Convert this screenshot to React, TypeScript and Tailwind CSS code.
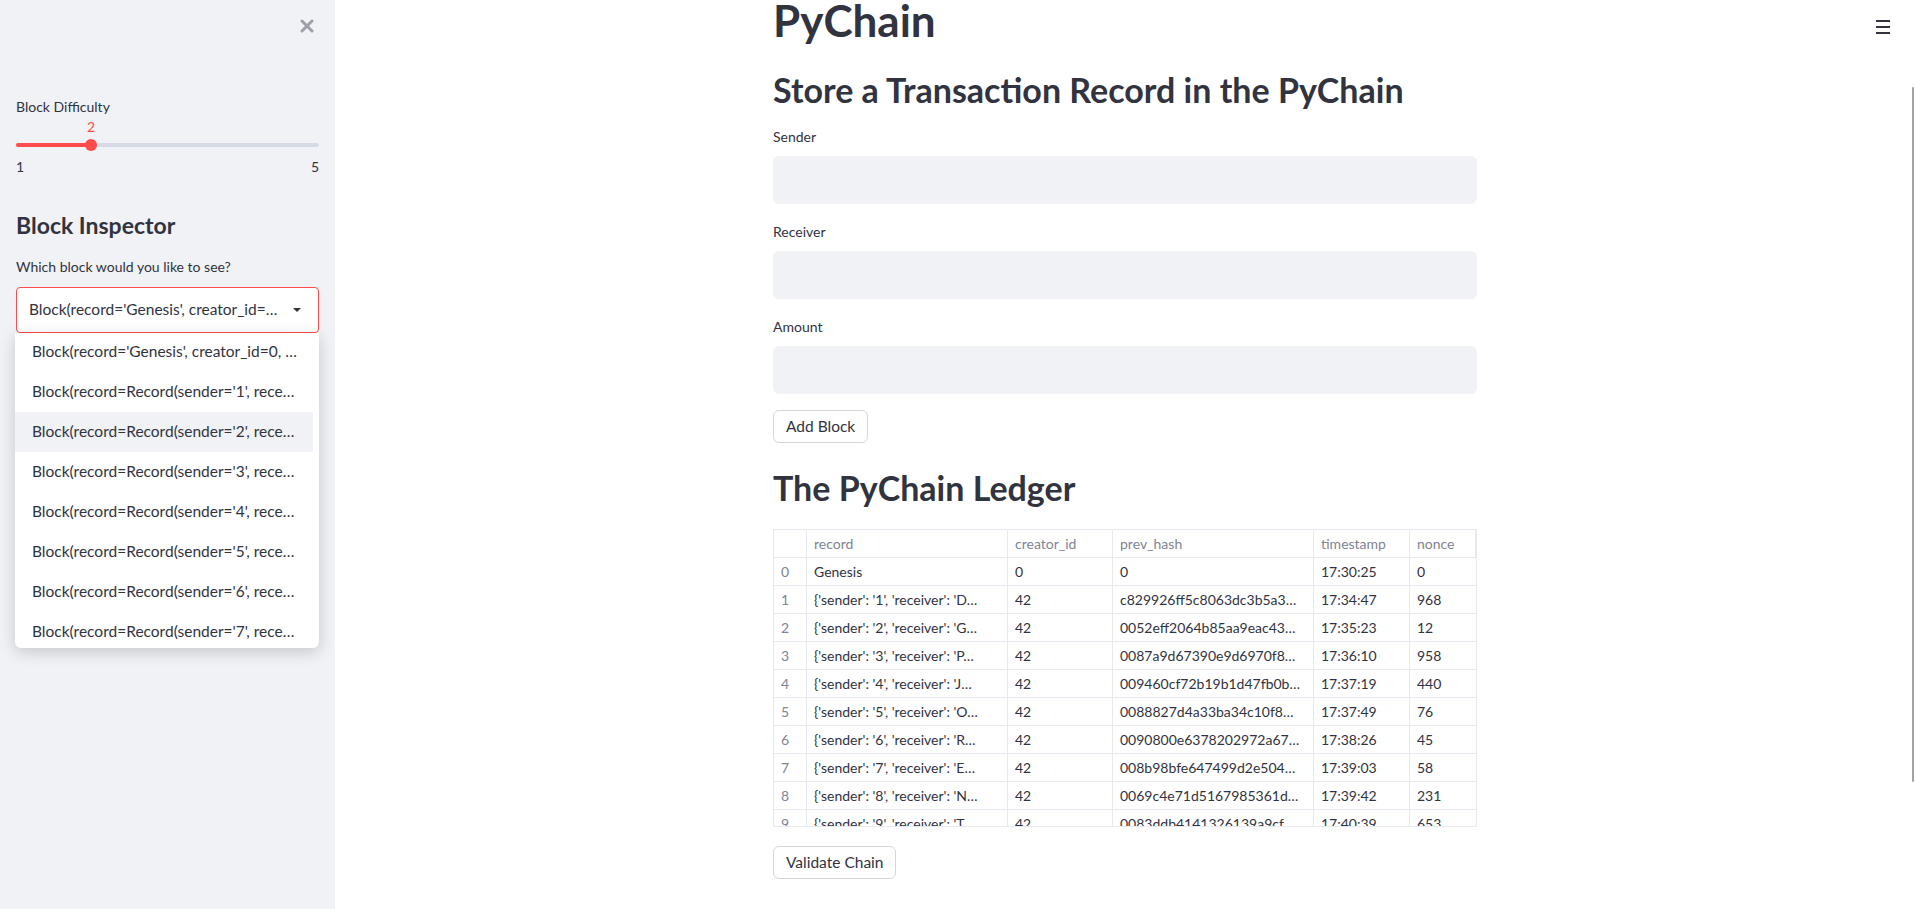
const rows = [
  ["0", "Genesis", "0", "0", "17:30:25", "0"],
  ["1", "{'sender': '1', 'receiver': 'D…", "42", "c829926ff5c8063dc3b5a3…", "17:34:47", "968"],
  ["2", "{'sender': '2', 'receiver': 'G…", "42", "0052eff2064b85aa9eac43…", "17:35:23", "12"],
  ["3", "{'sender': '3', 'receiver': 'P…", "42", "0087a9d67390e9d6970f8…", "17:36:10", "958"],
  ["4", "{'sender': '4', 'receiver': 'J…", "42", "009460cf72b19b1d47fb0b…", "17:37:19", "440"],
  ["5", "{'sender': '5', 'receiver': 'O…", "42", "0088827d4a33ba34c10f8…", "17:37:49", "76"],
  ["6", "{'sender': '6', 'receiver': 'R…", "42", "0090800e6378202972a67…", "17:38:26", "45"],
  ["7", "{'sender': '7', 'receiver': 'E…", "42", "008b98bfe647499d2e504…", "17:39:03", "58"],
  ["8", "{'sender': '8', 'receiver': 'N…", "42", "0069c4e71d5167985361d…", "17:39:42", "231"],
  ["9", "{'sender': '9', 'receiver': 'T…", "42", "0083ddb4141326139a9cf…", "17:40:39", "653"],
];

const options = [
  "Block(record='Genesis', creator_id=0, …",
  "Block(record=Record(sender='1', rece…",
  "Block(record=Record(sender='2', rece…",
  "Block(record=Record(sender='3', rece…",
  "Block(record=Record(sender='4', rece…",
  "Block(record=Record(sender='5', rece…",
  "Block(record=Record(sender='6', rece…",
  "Block(record=Record(sender='7', rece…",
];

const headers = ["", "record", "creator_id", "prev_hash", "timestamp", "nonce"];

const Field = ({ label }: { label: string }) => (
  <div className="flex flex-col">
    <p className="text-[14px] leading-[20px]">{label}</p>
    <div className="mt-[9px] h-[48px] w-full rounded-[6px] bg-[#f0f2f6]"></div>
  </div>
);

const Sidebar = () => (
  <div className="relative flex w-[335px] shrink-0 flex-col bg-[#f0f2f6] px-4">
    <div className="flex justify-end pt-[19px] pr-[5px]">
      <svg width="14" height="14" viewBox="0 0 14 14">
        <path d="M2 2L12 12M12 2L2 12" stroke="#9da0a9" strokeWidth="3" strokeLinecap="round" />
      </svg>
    </div>
    <p className="mt-[64px] text-[14px] leading-[20px]">Block Difficulty</p>
    <div className="relative h-[36px] w-full">
      <span className="absolute top-0 left-[75px] -translate-x-1/2 text-[14px] leading-[20px] text-[#ff4b4b]">2</span>
      <div className="absolute top-[26px] left-0 h-[4px] w-full rounded-full bg-[#d5dae5]"></div>
      <div className="absolute top-[26px] left-0 h-[4px] w-[75px] rounded-full bg-[#ff4b4b]"></div>
      <div className="absolute top-[22px] left-[69px] h-[12px] w-[12px] rounded-full bg-[#ff4b4b]"></div>
    </div>
    <div className="mt-[4px] flex justify-between text-[14px] leading-[20px]">
      <span>1</span>
      <span>5</span>
    </div>
    <p className="mt-[34px] text-[23px] leading-[28px] font-bold">Block Inspector</p>
    <p className="mt-[18px] text-[14px] leading-[20px]">Which block would you like to see?</p>
    <div className="relative mt-[10px]">
      <div className="flex h-[46px] items-center justify-between rounded-[4px] border border-[#ff4b4b] bg-white pr-[17px] pl-[12px]">
        <span className="text-[15.5px] whitespace-nowrap">Block(record='Genesis', creator_id=…</span>
        <svg width="8" height="4" viewBox="0 0 8 4">
          <path d="M0 0h8L4 4z" fill="#31333f" />
        </svg>
      </div>
      <div className="absolute top-full left-[-1px] z-10 h-[315px] w-[304px] overflow-hidden rounded-b-[6px] bg-white shadow-[0_4px_16px_rgba(0,0,0,0.18)]">
        <div className="-mt-[1px] flex flex-col">
          {options.map((o, i) => (
            <div
              key={i}
              className={`flex h-[40px] w-[298px] items-center pl-[17px] text-[15.5px] whitespace-nowrap ${i === 2 ? "bg-[#f0f2f6]" : ""}`}
            >
              {o}
            </div>
          ))}
        </div>
      </div>
    </div>
  </div>
);

const Ledger = () => (
  <div className="h-[298px] w-full overflow-hidden border border-[#e6e9ef]">
    <div className="grid grid-cols-[33px_201px_105px_201px_96px_66px] text-[14px]">
      {headers.map((h, i) => (
        <div
          key={i}
          className="flex h-[28px] items-center border-r border-b border-[#e6e9ef] pl-[7px] text-[#808495] last:border-r-0"
        >
          {h}
        </div>
      ))}
      {rows.map((r) =>
        r.map((c, j) => (
          <div
            key={r[0] + "-" + j}
            className={`flex h-[28px] items-center overflow-hidden border-b border-[#e6e9ef] pl-[7px] whitespace-nowrap ${
              j === 0 ? "text-[#808495]" : ""
            } ${j === 5 ? "" : "border-r"}`}
          >
            {c}
          </div>
        ))
      )}
    </div>
  </div>
);

export default function App() {
  return (
    <div className="relative flex h-[909px] w-full overflow-hidden font-['Lato',sans-serif] text-[#31333f]">
      <Sidebar />
      <div className="relative flex-1 bg-white">
        <div className="mx-auto flex w-[704px] flex-col">
          <h1 className="text-[44px] leading-[40px] font-bold">PyChain</h1>
          <h2 className="mt-[32px] text-[34px] leading-[36px] font-bold">Store a Transaction Record in the PyChain</h2>
          <div className="mt-[19px] flex flex-col gap-[18px]">
            <Field label="Sender" />
            <Field label="Receiver" />
            <Field label="Amount" />
          </div>
          <div className="mt-[16px]">
            <button className="h-[33px] rounded-[6px] border border-[#d5d6d9] bg-white px-[12px] text-[15.5px]">Add Block</button>
          </div>
          <h2 className="mt-[27px] text-[34px] leading-[36px] font-bold">The PyChain Ledger</h2>
          <div className="mt-[23px]">
            <Ledger />
          </div>
          <div className="mt-[19px]">
            <button className="h-[33px] rounded-[6px] border border-[#d5d6d9] bg-white px-[12px] text-[15.5px]">Validate Chain</button>
          </div>
        </div>
        <div className="absolute top-[20px] right-[25px] flex w-[14px] flex-col gap-[4px]">
          <div className="h-[2px] w-full bg-[#31333f]"></div>
          <div className="h-[2px] w-full bg-[#31333f]"></div>
          <div className="h-[2px] w-full bg-[#31333f]"></div>
        </div>
        <div className="absolute top-[87px] right-[1px] h-[695px] w-[2px] rounded-full bg-[#a2a3aa]"></div>
      </div>
    </div>
  );
}
